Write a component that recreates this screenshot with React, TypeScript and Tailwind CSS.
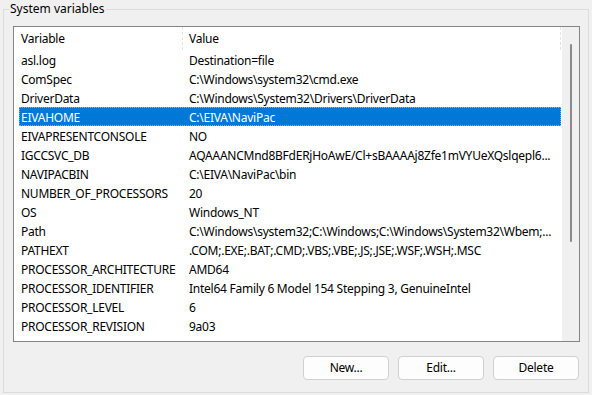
import React from "react";

const rows: [string, string][] = [
  ["asl.log", "Destination=file"],
  ["ComSpec", "C:\\Windows\\system32\\cmd.exe"],
  ["DriverData", "C:\\Windows\\System32\\Drivers\\DriverData"],
  ["EIVAHOME", "C:\\EIVA\\NaviPac"],
  ["EIVAPRESENTCONSOLE", "NO"],
  ["IGCCSVC_DB", "AQAAANCMnd8BFdERjHoAwE/Cl+sBAAAAj8Zfe1mVYUeXQslqepl6..."],
  ["NAVIPACBIN", "C:\\EIVA\\NaviPac\\bin"],
  ["NUMBER_OF_PROCESSORS", "20"],
  ["OS", "Windows_NT"],
  ["Path", "C:\\Windows\\system32;C:\\Windows;C:\\Windows\\System32\\Wbem;..."],
  ["PATHEXT", ".COM;.EXE;.BAT;.CMD;.VBS;.VBE;.JS;.JSE;.WSF;.WSH;.MSC"],
  ["PROCESSOR_ARCHITECTURE", "AMD64"],
  ["PROCESSOR_IDENTIFIER", "Intel64 Family 6 Model 154 Stepping 3, GenuineIntel"],
  ["PROCESSOR_LEVEL", "6"],
  ["PROCESSOR_REVISION", "9a03"],
];

const selected = "EIVAHOME";

function VarRow({ name, value }: { name: string; value: string }) {
  const isSel = name === selected;
  return (
    <div className="h-[19px] pl-[5px] flex">
      <div
        className={
          isSel
            ? "w-[542px] flex items-center bg-[#0078d7] text-white outline-1 outline-dotted outline-[#e0a040] -outline-offset-1"
            : "w-[542px] flex items-center text-black"
        }
      >
        <div className="w-[164px] pl-[2px] pt-[2px] whitespace-nowrap overflow-hidden">{name}</div>
        <div className="flex-1 pl-[6px] pt-[2px] whitespace-nowrap overflow-hidden">{value}</div>
      </div>
    </div>
  );
}

function Btn({ label }: { label: string }) {
  return (
    <button className="w-[86px] h-[24px] rounded-[4px] border border-[#d0d0d0] bg-[#fdfdfd] text-black flex items-center justify-center">
      {label}
    </button>
  );
}

export default function App() {
  return (
    <div
      className="w-[592px] h-[395px] bg-[#f0f0f0] overflow-hidden pt-[9px] pl-[3px] text-[12px] leading-[16px] tracking-[-0.25px]"
      style={{ fontFamily: '"Segoe UI", "Noto Sans", sans-serif' }}
    >
      <div className="relative w-[586px] h-[384px] border border-[#dcdcdc] pt-[16px] pl-[9px]">
        <span className="absolute left-[5px] -top-[9px] bg-[#f0f0f0] px-[1px] text-black tracking-normal">
          System variables
        </span>

        {/* list view */}
        <div className="w-[567px] h-[316px] border border-[#858585] bg-white flex">
          <div className="w-[548px] flex flex-col">
            <div className="h-[23px] flex items-center">
              <div className="w-[169px] pl-[7px] pt-[1px] h-full flex items-center border-r border-dashed border-[#e3e3e3]">
                Variable
              </div>
              <div className="w-[378px] pl-[6px] pt-[1px] h-full flex items-center border-r border-dashed border-[#e3e3e3]">
                Value
              </div>
            </div>
            {rows.map(([n, v]) => (
              <VarRow key={n} name={n} value={v} />
            ))}
          </div>
          <div className="w-[17px] bg-[#f0f0f0] flex justify-center pt-[17px]">
            <div className="w-[2px] h-[198px] bg-[#8a8a8a] rounded-full" />
          </div>
        </div>

        <div className="w-[566px] mt-[14px] flex justify-end gap-[9px]">
          <Btn label="New..." />
          <Btn label="Edit..." />
          <Btn label="Delete" />
        </div>
      </div>
    </div>
  );
}
